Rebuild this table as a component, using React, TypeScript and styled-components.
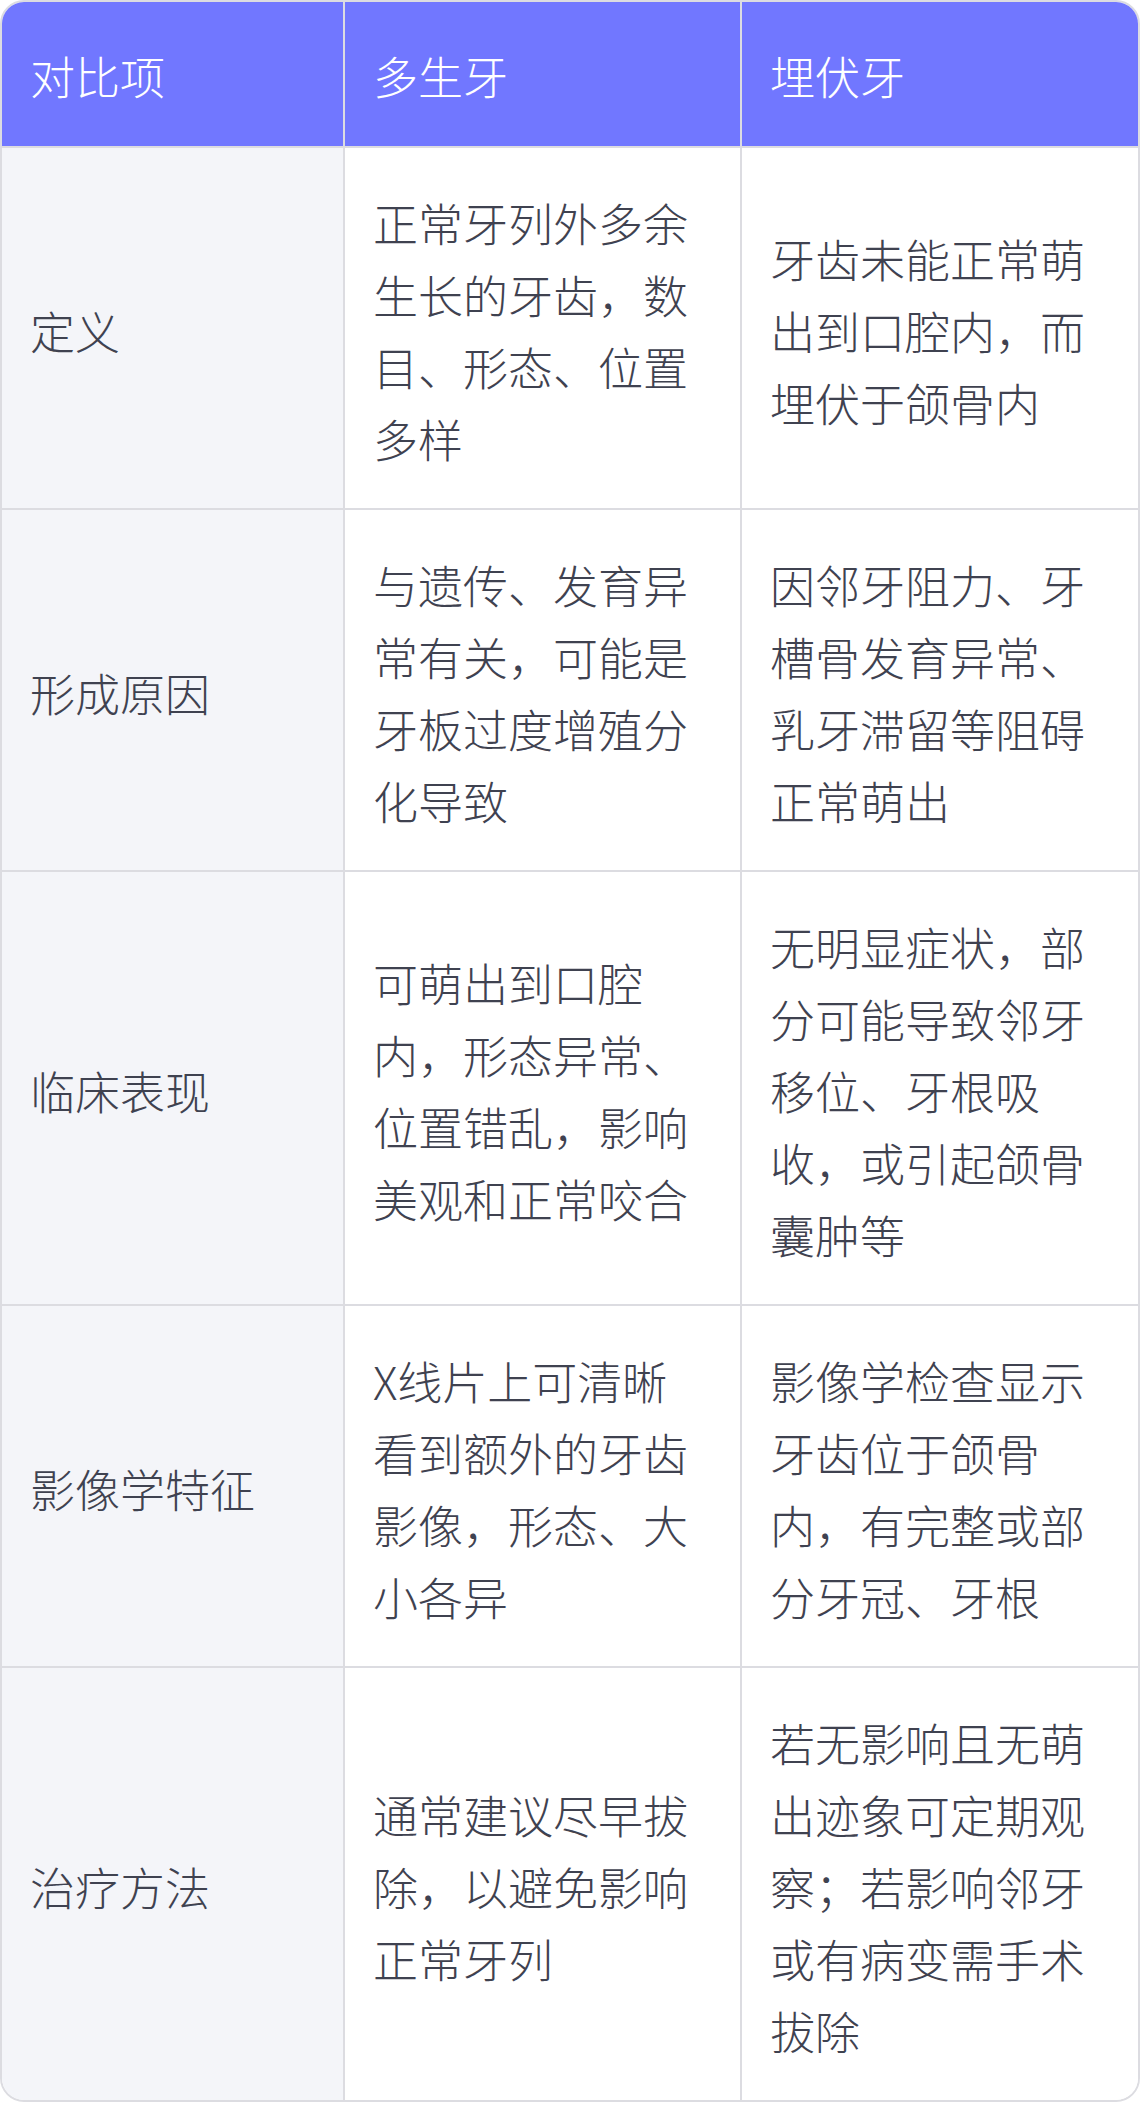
import styled, { createGlobalStyle } from 'styled-components';

const GlobalStyle = createGlobalStyle`
  html, body {
    margin: 0;
    padding: 0;
    background: #ffffff;
  }
  body {
    font-family: "Noto Sans CJK SC", "Noto Sans", sans-serif;
  }
`;

const Wrapper = styled.div`
  width: 1140px;
  box-sizing: border-box;
  border: 2px solid #dcdce1;
  border-radius: 24px;
  overflow: hidden;
`;

const Table = styled.table`
  width: 100%;
  border-collapse: separate;
  border-spacing: 0;
  table-layout: fixed;
  font-size: 45px;
  font-weight: 300;
  line-height: 72px;
`;

const HeadCell = styled.th`
  background-color: #7177ff;
  color: #ffffff;
  font-weight: 300;
  text-align: left;
  padding: 38px 30px 34px 28px;
  border-bottom: 2px solid #dcdce1;
  border-right: 2px solid #dcdce1;

  &:last-child {
    border-right: 0;
  }
`;

const Cell = styled.td<{ label?: boolean; last?: boolean }>`
  background-color: ${(props) => (props.label ? '#f4f5f9' : '#ffffff')};
  color: #3f4250;
  padding: 39px 30px 33px 28px;
  vertical-align: middle;
  border-right: 2px solid #dcdce1;
  border-bottom: ${(props) => (props.last ? '0' : '2px solid #dcdce1')};

  &:last-child {
    border-right: 0;
  }
`;

const rows = [
  {
    label: '定义',
    a: '正常牙列外多余生长的牙齿，数目、形态、位置多样',
    b: '牙齿未能正常萌出到口腔内，而埋伏于颌骨内',
  },
  {
    label: '形成原因',
    a: '与遗传、发育异常有关，可能是牙板过度增殖分化导致',
    b: '因邻牙阻力、牙槽骨发育异常、乳牙滞留等阻碍正常萌出',
  },
  {
    label: '临床表现',
    a: '可萌出到口腔内，形态异常、位置错乱，影响美观和正常咬合',
    b: '无明显症状，部分可能导致邻牙移位、牙根吸收，或引起颌骨囊肿等',
  },
  {
    label: '影像学特征',
    a: 'X线片上可清晰看到额外的牙齿影像，形态、大小各异',
    b: '影像学检查显示牙齿位于颌骨内，有完整或部分牙冠、牙根',
  },
  {
    label: '治疗方法',
    a: '通常建议尽早拔除，以避免影响正常牙列',
    b: '若无影响且无萌出迹象可定期观察；若影响邻牙或有病变需手术拔除',
  },
];

export default function App() {
  return (
    <>
      <GlobalStyle />
      <Wrapper>
        <Table>
          <colgroup>
            <col style={{ width: '343px' }} />
            <col style={{ width: '397px' }} />
            <col style={{ width: '396px' }} />
          </colgroup>
          <thead>
            <tr>
              <HeadCell>对比项</HeadCell>
              <HeadCell>多生牙</HeadCell>
              <HeadCell>埋伏牙</HeadCell>
            </tr>
          </thead>
          <tbody>
            {rows.map((row, i) => {
              const last = i === rows.length - 1;
              return (
                <tr key={row.label}>
                  <Cell label last={last}>
                    {row.label}
                  </Cell>
                  <Cell last={last}>{row.a}</Cell>
                  <Cell last={last}>{row.b}</Cell>
                </tr>
              );
            })}
          </tbody>
        </Table>
      </Wrapper>
    </>
  );
}
